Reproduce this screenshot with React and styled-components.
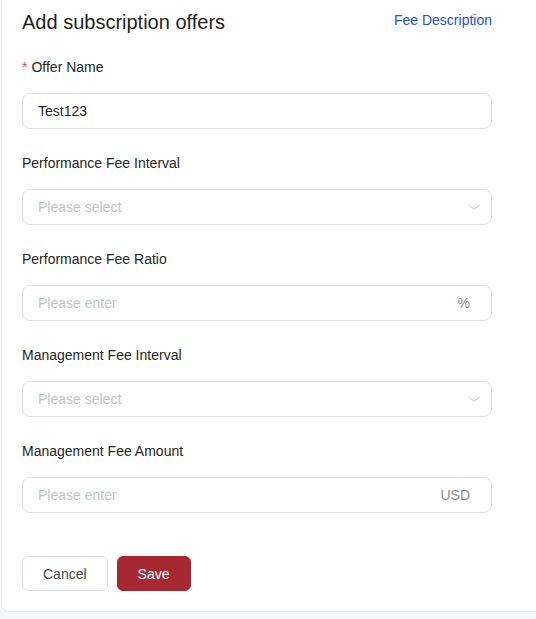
import React from "react";
import styled, { createGlobalStyle } from "styled-components";

const GlobalStyle = createGlobalStyle`
  body {
    margin: 0;
    background: #f5f6f8;
    font-family: "Liberation Sans", Arial, sans-serif;
    overflow: hidden;
  }
`;

const Card = styled.div`
  margin-left: 1px;
  margin-right: -12px;
  background: #ffffff;
  border: 1px solid #e8eaef;
  border-top: none;
  border-radius: 0 0 8px 8px;
  padding: 8px 20px 20px 20px;
`;

const Content = styled.div`
  width: 470px;
`;

const Header = styled.div`
  display: flex;
  justify-content: space-between;
  align-items: flex-start;
  height: 28px;
  margin-bottom: 20px;
`;

const Title = styled.h1`
  margin: 0;
  font-size: 20px;
  line-height: 28px;
  font-weight: 400;
  color: #1f1f1f;
`;

const Link = styled.a`
  font-size: 14px;
  line-height: 24px;
  color: #2750d0;
  text-decoration: none;
  cursor: pointer;
`;

const Field = styled.div`
  margin-bottom: 23px;
`;

const Label = styled.label`
  display: block;
  font-size: 14px;
  line-height: 22px;
  color: #262626;
  margin-bottom: 15px;
`;

const Star = styled.span`
  color: #e5484d;
  margin-right: 4px;
`;

const Box = styled.div`
  display: flex;
  align-items: center;
  height: 36px;
  box-sizing: border-box;
  border: 1px solid #dcdfe6;
  border-radius: 8px;
  padding: 0 ${(p) => (p.$select ? "10px" : "21px")} 0 15px;
  background: #fff;
`;

const Value = styled.span`
  flex: 1;
  font-size: 14px;
  color: ${(p) => (p.$placeholder ? "#c0c4cc" : "#262626")};
`;

const Suffix = styled.span`
  font-size: 14px;
  color: #8c8c8c;
`;

const Chevron = () => (
  <svg width="14" height="12" viewBox="0 0 14 12">
    <path d="M1.5 4 L7 8.5 L12.5 4" fill="none" stroke="#c8cbd2" strokeWidth="1" />
  </svg>
);

const Actions = styled.div`
  display: flex;
  gap: 9px;
  margin-top: 43px;
`;

const Button = styled.button`
  height: 35px;
  box-sizing: border-box;
  padding: 0 20px;
  font-family: inherit;
  font-size: 14px;
  border-radius: 6px;
  cursor: pointer;
  border: 1px solid ${(p) => (p.$primary ? "#a52833" : "#dcdfe6")};
  background: ${(p) => (p.$primary ? "#a52833" : "#fff")};
  color: ${(p) => (p.$primary ? "#fff" : "#4a4a4a")};
`;

const fields = [
  { label: "Performance Fee Interval", kind: "select" },
  { label: "Performance Fee Ratio", kind: "input", suffix: "%" },
  { label: "Management Fee Interval", kind: "select" },
  { label: "Management Fee Amount", kind: "input", suffix: "USD" },
];

export default function App() {
  return (
    <>
      <GlobalStyle />
      <Card>
        <Content>
          <Header>
            <Title>Add subscription offers</Title>
            <Link>Fee Description</Link>
          </Header>

          <Field>
            <Label>
              <Star>*</Star>Offer Name
            </Label>
            <Box>
              <Value>Test123</Value>
            </Box>
          </Field>

          {fields.map((f) => (
            <Field key={f.label}>
              <Label>{f.label}</Label>
              <Box $select={f.kind === "select"}>
                <Value $placeholder>{f.kind === "select" ? "Please select" : "Please enter"}</Value>
                {f.kind === "select" ? <Chevron /> : <Suffix>{f.suffix}</Suffix>}
              </Box>
            </Field>
          ))}

          <Actions>
            <Button>Cancel</Button>
            <Button $primary>Save</Button>
          </Actions>
        </Content>
      </Card>
    </>
  );
}
